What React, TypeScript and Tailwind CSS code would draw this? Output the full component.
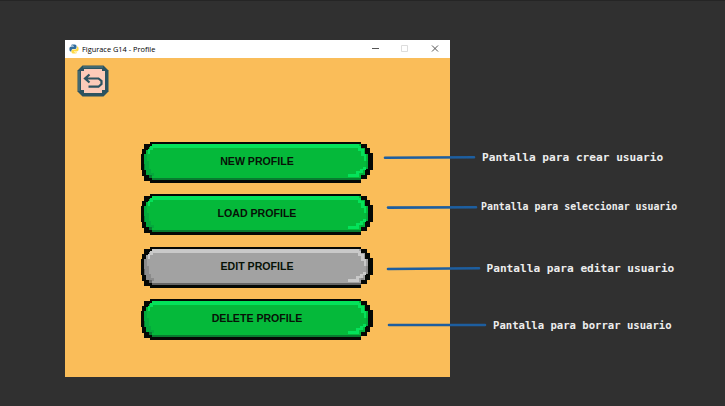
import React from "react";

type Tone = { base: string; light: string; soft: string; dark: string };

const green: Tone = { base: "#05b93a", light: "#04e25a", soft: "#04a93c", dark: "#087c30" };
const gray: Tone = { base: "#a2a2a2", light: "#c9c9c9", soft: "#8b8b8b", dark: "#656565" };

function PixelButton({ label, tone }: { label: string; tone: Tone }) {
  return (
    <button className="relative block h-[41px] w-[232px]">
      <svg viewBox="0 0 232 41" className="block h-[41px] w-[232px]">
        <path
          fill="#050805"
          d="M9 0H220V2H226V6H229V11H232V28H229V33H226V37H220V41H9V39H3V34H1V28H0V12H1V7H3V2H9Z"
        />
        <path fill={tone.base} d="M11 2H220V6H224V12H227V27H224V33H220V38H11V36H8V33H5V28H3V12H5V8H8V5H11Z" />
        <path fill={tone.light} d="M11 2H218V6H12V8H9V12H7V7H9V4H11Z" />
        <path fill={tone.light} d="M216 4H220V7H223V12H225V19H223V14H220V9H217V6H216Z" />
        <path fill={tone.light} d="M222 25H225V28H222V31H218V35H207V32H215V29H219V27H222Z" />
        <path fill={tone.soft} d="M3 12H6V19H8V27H10V31H13V34H11V36H8V33H5V28H3Z" />
        <path fill={tone.soft} d="M225 19H227V27H225ZM220 31H223V33H220Z" />
        <path fill={tone.dark} d="M11 36H220V38H11ZM8 33H11V36H8ZM3 22H4V28H3Z" />
      </svg>
      <span className="absolute inset-x-0 top-[12px] text-center text-[10.6px] leading-[14px] font-bold text-[#071207]">
        {label}
      </span>
    </button>
  );
}

function BackIcon() {
  return (
    <svg viewBox="0 0 32 32" className="block h-8 w-8">
      <path fill="#2c5360" d="M5.5 .5H26.5L31.5 5.5V26.5L26.5 31.5H5.5L.5 26.5V5.5Z" />
      <path fill="#598083" d="M6 1.5H26V2.5H6ZM1.5 6H2.5V26H1.5Z" />
      <path fill="#fccbb9" d="M7 4H25V6H28V25H25V28H7V25H4V6H7Z" />
      <path
        fill="none"
        stroke="#2c5360"
        strokeWidth="2.2"
        d="M12.5 9.5L8 13.5L12.5 17.5M8 13.5H21.5L24.5 16V19L21.5 21.7H11.5"
      />
    </svg>
  );
}

function PythonIcon() {
  return (
    <svg viewBox="0 0 24 24" className="block h-[10px] w-[10px]">
      <path
        fill="#316d9e"
        d="M7 1H14Q18 1 18 5V9Q18 12 14 12H9Q6 12 6 16V18H4Q1 18 1 13V10Q1 6 6 6H12V5H6V3Q6 1 7 1Z"
      />
      <path
        fill="#ffda45"
        d="M17 23H10Q6 23 6 19V16Q6 13 10 13H15Q19 13 19 9V6H20Q23 6 23 11V14Q23 18 18 18H12V19H18V21Q18 23 17 23Z"
      />
      <path fill="#fff" d="M8 3H10V5H8ZM14 20H16V22H14Z" />
    </svg>
  );
}

export default function App() {
  return (
    <main className="flex h-[406px] w-[725px] overflow-hidden bg-[#303030] pt-10 pl-[65px] font-['Liberation_Sans',Arial,sans-serif]">
      <section className="h-[337px] w-[385px] shrink-0 bg-[#fabd59]">
        <header className="flex h-[18px] items-center bg-white pl-1">
          <PythonIcon />
          <h1 className="ml-[3px] w-[76px] font-['Open_Sans','Noto_Sans',sans-serif] text-[7.4px] leading-[10px] whitespace-nowrap text-black">
            Figurace G14 - Profile
          </h1>
          <svg viewBox="0 0 80 18" className="ml-[210px] h-[18px] w-20 shrink-0" fill="none">
            <path d="M4 8.5H11" stroke="#555" />
            <path d="M33.5 5.5H39.5V11.5H33.5Z" stroke="#ddd" />
            <path d="M64 5.5L70 11.5M70 5.5L64 11.5" stroke="#555" />
          </svg>
        </header>
        <div className="pt-[7px] pl-3">
          <BackIcon />
        </div>
        <nav className="mt-[45px] ml-[76px] flex flex-col gap-[11.4px]">
          <PixelButton label="NEW PROFILE" tone={green} />
          <PixelButton label="LOAD PROFILE" tone={green} />
          <PixelButton label="EDIT PROFILE" tone={gray} />
          <PixelButton label="DELETE PROFILE" tone={green} />
        </nav>
      </section>
      <aside className="flex flex-col pl-[31px] font-['DejaVu_Sans_Mono',monospace] font-bold whitespace-nowrap text-[#ededed]">
        <p className="mt-[110px] h-4 pl-px text-[11.15px] leading-4">Pantalla para crear usuario</p>
        <p className="mt-[33px] h-4 text-[9.9px] leading-4">Pantalla para seleccionar usuario</p>
        <p className="mt-[46px] h-4 pl-[5.5px] text-[11.15px] leading-4">Pantalla para editar usuario</p>
        <p className="mt-[40px] h-4 pl-[12px] text-[10.6px] leading-4">Pantalla para borrar usuario</p>
      </aside>
      <svg
        viewBox="0 0 725 406"
        className="pointer-events-none absolute top-0 left-0 h-[406px] w-[725px]"
        stroke="#1d5e9f"
        strokeWidth="2.6"
        strokeLinecap="round"
      >
        <path d="M385 157.7L474 157.2M388 207.6L476 207.2M388 269L479 268.3M389 325H485" />
        <path d="M0 .5H725" stroke="#252525" strokeWidth="1" />
      </svg>
    </main>
  );
}
